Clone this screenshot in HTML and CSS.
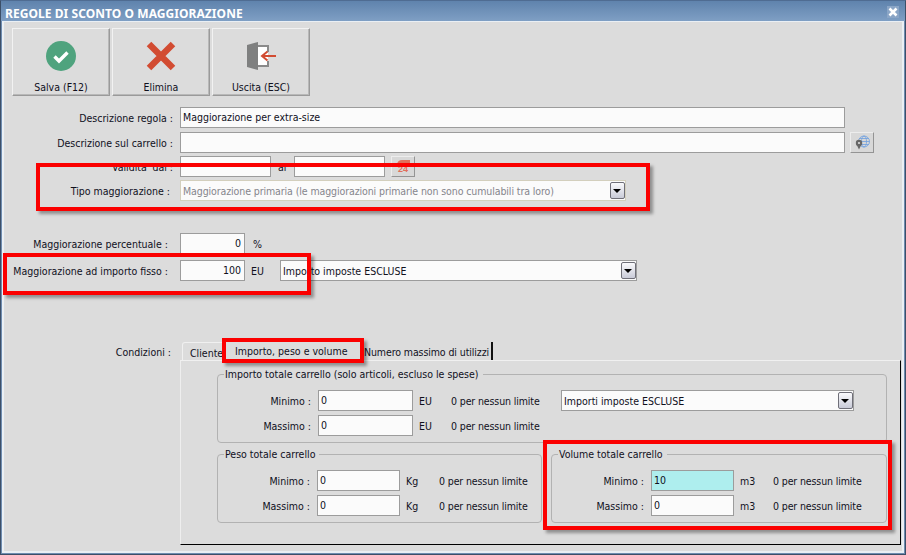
FILE: index.html
```html
<!DOCTYPE html>
<html lang="it">
<head>
<meta charset="utf-8">
<title>Regole di sconto o maggiorazione</title>
<link rel="stylesheet" href="styles.css">
</head>
<body>
<div class="window">
  <header class="titlebar">
    <span class="title">REGOLE DI SCONTO O MAGGIORAZIONE</span>
    <span class="close"><svg width="10" height="10" viewBox="0 0 10 10"><path d="M1.500 1.500l7 7M8.500 1.500l-7 7" stroke="#fff" stroke-width="2.600" fill="none"/></svg></span>
  </header>
  <div class="body">
    <nav class="toolbar">
      <button class="tool">
        <svg width="30" height="30" viewBox="0 0 30 30"><circle cx="15" cy="15" r="15" fill="#4fa37e"/><path d="M8.500 15.500l4.500 4.500 8.500-8.500" stroke="#fff" stroke-width="3.400" fill="none"/></svg>
        <span>Salva (F12)</span>
      </button>
      <button class="tool">
        <svg width="30" height="30" viewBox="0 0 30 30"><path d="M3 3l24 24M27 3L3 27" stroke="#d24c32" stroke-width="6.400" fill="none"/></svg>
        <span>Elimina</span>
      </button>
      <button class="tool">
        <svg width="30" height="30" viewBox="0 0 30 30"><path d="M1 4l11-3v28L1 26z" fill="#7f8080"/><path d="M12 4h10v22H12z" fill="#fff"/><path d="M12 4h11v7h-2V6h-9zM12 26h11v-6h-2v4h-9z" fill="#8a8a8a"/><path d="M30 15H17" stroke="#d24c32" stroke-width="2"/><path d="M21.500 10.500L16 15l5.500 4.500" stroke="#d24c32" stroke-width="2" fill="none"/></svg>
        <span>Uscita (ESC)</span>
      </button>
    </nav>

    <section class="form">
      <div class="row row-first">
        <label class="label">Descrizione regola :</label>
        <input class="input wide" value="Maggiorazione per extra-size">
      </div>
      <div class="row row-second">
        <label class="label">Descrizione sul carrello :</label>
        <input class="input wide">
        <button class="mini globe">
          <svg width="15" height="15" viewBox="0 0 15 15"><g fill="none" stroke="#6f9fe0" stroke-width=".8"><circle cx="9" cy="6.500" r="5.500"/><ellipse cx="9" cy="6.500" rx="2.500" ry="5.500"/><path d="M3.500 6.500h11M4.500 3.500h9M4.500 9.500h9"/></g><circle cx="4" cy="8" r="3.200" fill="#666"/><circle cx="4" cy="8" r="1.100" fill="#ddd"/><path d="M1.800 10L4 14.500 6.200 10z" fill="#666"/></svg>
        </button>
      </div>
      <div class="row">
        <label class="label">Validita' dal :</label>
        <input class="input date">
        <span class="between">al</span>
        <input class="input date">
        <button class="mini cal">
          <svg width="16" height="15" viewBox="0 0 16 15"><path d="M2 5Q3 1 7 1h8v3H7Q5 4 4 6z" fill="#e0705c"/><text x="3" y="13" class="cal-num">24</text></svg>
        </button>
      </div>
      <div class="row">
        <label class="label tight-sm">Tipo maggiorazione :</label>
        <div class="select type-select disabled">
          <span>Maggiorazione primaria (le maggiorazioni primarie non sono cumulabili tra loro)</span>
          <i class="arrow"></i>
        </div>
      </div>
      <div class="row amount-first">
        <label class="label tight">Maggiorazione percentuale :</label>
        <input class="input num" value="0">
        <span class="unit unit-pct">%</span>
      </div>
      <div class="row amount-next">
        <label class="label tight">Maggiorazione ad importo fisso :</label>
        <input class="input num" value="100">
        <span class="unit">EU</span>
        <div class="select tax-select">
          <span>Importo imposte ESCLUSE</span>
          <i class="arrow"></i>
        </div>
      </div>
    </section>

    <section class="conditions">
      <div class="tabs-row">
        <span class="label cond-label">Condizioni :</span>
        <div class="tabs">
          <span class="tab tab-client">Cliente</span>
          <span class="tab tab-active">Importo, peso e volume</span>
          <span class="tab tab-last">Numero massimo di utilizzi</span>
        </div>
      </div>
      <div class="panel">
        <fieldset class="group group-total">
          <legend>Importo totale carrello (solo articoli, escluso le spese)</legend>
          <div class="grow">
            <span class="glabel">Minimo :</span>
            <input class="input gi-wide" value="0">
            <span class="gunit">EU</span>
            <span class="hint">0 per nessun limite</span>
            <div class="select group-select">
              <span>Importi imposte ESCLUSE</span>
              <i class="arrow"></i>
            </div>
          </div>
          <div class="grow">
            <span class="glabel">Massimo :</span>
            <input class="input gi-wide" value="0">
            <span class="gunit">EU</span>
            <span class="hint">0 per nessun limite</span>
          </div>
        </fieldset>
        <div class="group-pair">
          <fieldset class="group group-weight">
            <legend>Peso totale carrello</legend>
            <div class="grow">
              <span class="glabel">Minimo :</span>
              <input class="input gi" value="0">
              <span class="gunit">Kg</span>
              <span class="hint">0 per nessun limite</span>
            </div>
            <div class="grow">
              <span class="glabel">Massimo :</span>
              <input class="input gi" value="0">
              <span class="gunit">Kg</span>
              <span class="hint">0 per nessun limite</span>
            </div>
          </fieldset>
          <fieldset class="group group-volume">
            <legend>Volume totale carrello</legend>
            <div class="grow">
              <span class="glabel">Minimo :</span>
              <input class="input gi focus" value="10">
              <span class="gunit">m3</span>
              <span class="hint">0 per nessun limite</span>
            </div>
            <div class="grow">
              <span class="glabel">Massimo :</span>
              <input class="input gi" value="0">
              <span class="gunit">m3</span>
              <span class="hint">0 per nessun limite</span>
            </div>
          </fieldset>
        </div>
      </div>
    </section>
  </div>

  <div class="mark mark-type"></div>
  <div class="mark mark-fixed"></div>
  <div class="mark mark-tab"></div>
  <div class="mark mark-volume"></div>
</div>
</body>
</html>
```

FILE: styles.css
```css
* { box-sizing: border-box; }
html, body { margin: 0; padding: 0; }
body {
  width: 906px;
  height: 555px;
  overflow: hidden;
  font-family: "DejaVu Sans Condensed", "DejaVu Sans", sans-serif;
  font-stretch: condensed;
  font-size: 10.5px;
  color: #10101c;
}
.window {
  position: relative;
  width: 906px;
  height: 555px;
  display: flex;
  flex-direction: column;
  background: #6e8cb0;
  border: 1px solid #3c4f68;
  border-top-color: #4f6c92;
}
.titlebar {
  flex: none;
  height: 20px;
  display: flex;
  align-items: center;
  justify-content: space-between;
  padding: 0 6px 0 4px;
  background: linear-gradient(#5f83ad, #7f9fc4);
}
.title {
  padding-top: 4px;
  color: #fff;
  font-family: "Noto Sans", sans-serif;
  font-stretch: normal;
  font-size: 12px;
  font-weight: 700;
  letter-spacing: .06px;
}
.close {
  width: 12px;
  height: 12px;
  margin-top: 2px;
  display: flex;
  align-items: center;
  justify-content: center;
  background: #8aa5c6;
}
.body {
  flex: 1;
  margin: 0 1px 1px;
  padding: 6px 0 0 8px;
  background: #dcdcdc;
  border: 2px solid #eaeff4;
  border-top-width: 1px;
  display: flex;
  flex-direction: column;
}

.toolbar { display: flex; gap: 2px; }
.tool {
  width: 98px;
  height: 68px;
  padding: 12px 0 0;
  display: flex;
  flex-direction: column;
  align-items: center;
  gap: 10px;
  font: inherit;
  color: inherit;
  background: #dcdcdc;
  border: 1px solid;
  border-color: #f2f2f2 #9a9a9a #9a9a9a #f2f2f2;
  box-shadow: inset -1px -1px 0 #b8b8b8;
}

.form { margin-top: 11px; }
.row {
  display: flex;
  align-items: center;
  height: 21px;
  margin-bottom: 3px;
}
.row-first { margin-bottom: 4px; }
.label {
  width: 161px;
  margin-right: 7px;
  text-align: right;
  white-space: nowrap;
}
.label.tight-sm { width: 158px; margin-right: 10px; }
.label.tight { width: 156px; margin-right: 12px; }
.input {
  height: 21px;
  padding: 0 2px 2px;
  font: inherit;
  color: inherit;
  background: #fbfbfb;
  border: 1px solid #9c9c9c;
  border-radius: 0;
  outline: none;
}
.wide { width: 665px; }
.date { width: 91px; }
.between { width: 23px; padding-left: 7px; }
.mini {
  width: 24px;
  height: 21px;
  padding: 0;
  display: flex;
  align-items: center;
  justify-content: center;
  background: #d8d8d8;
  border: 1px solid;
  border-color: #ededed #949494 #949494 #ededed;
}
.globe { margin-left: 5px; }
.cal { margin-left: 6px; }
.cal-num { font-size: 9px; font-weight: 700; fill: #e0705c; font-family: "Liberation Sans", sans-serif; }

.select {
  height: 21px;
  padding: 0 0 0 2px;
  display: flex;
  align-items: center;
  justify-content: space-between;
  background: #fbfbfb;
  border: 1px solid #9c9c9c;
  white-space: nowrap;
}
.select.disabled { color: #85858c; border-color: #d3cfbd; letter-spacing: -.1px; }
.type-select { width: 446px; }
.tax-select { width: 357px; }
.group-select { width: 293px; margin-left: 20px; }
.arrow {
  position: relative;
  flex: none;
  width: 15px;
  height: 17px;
  background: linear-gradient(#fafafc, #c9cbd8);
  border: 1px solid #6f6f78;
  border-radius: 2px;
}
.arrow::after {
  content: "";
  position: absolute;
  left: 2px;
  top: 6px;
  border: 4px solid transparent;
  border-top: 4px solid #000;
  border-bottom: 0;
}
.amount-first { margin-top: 32px; margin-bottom: 6px; }
.num { width: 65px; text-align: right; padding-right: 3px; }
.unit { width: 35px; padding-left: 6px; }
.unit-pct { padding-left: 8px; }

.conditions { margin-top: 58px; flex: 1; display: flex; flex-direction: column; }
.tabs-row { display: flex; height: 18px; }
.label.cond-label { width: 159px; margin-right: 9px; padding-top: 4px; }
.tabs { display: flex; margin-left: 2px; align-items: stretch; }
.tab { padding-top: 4px; white-space: nowrap; }
.tab-client {
  width: 43px;
  padding-left: 7px;
  border: 1px solid #f0f0f0;
  border-bottom: 0;
  border-radius: 3px 0 0 0;
}
.tab-active {
  width: 138px;
  padding-left: 10px;
  padding-top: 3px;
}
.tab-last {
  width: 130px;
  padding-left: 1px;
  letter-spacing: -.1px;
  border-right: 2px solid #111;
}
.panel {
  flex: 1;
  margin: 0 1px 6px 168px;
  padding: 6px 0 0 36px;
  border-top: 1px solid #f0f0f0;
  border-left: 1px solid #eeeeee;
  border-right: 1px solid #000;
  border-bottom: 1px solid #000;
}
.group {
  margin: 0;
  padding: 0;
  border: 1px solid #b2b2b2;
  border-radius: 4px;
}
.group legend {
  margin-left: 6px;
  padding: 0 4px 0 1px;
  line-height: 14px;
}
.group-total { width: 670px; height: 76px; padding-top: 9px; }
.group-pair { display: flex; gap: 9px; margin-top: 4px; }
.group-weight, .group-volume { height: 76px; padding-top: 9px; }
.group-weight { width: 325px; }
.group-volume { width: 336px; }
.grow {
  display: flex;
  align-items: center;
  height: 21px;
  margin-bottom: 4px;
}
.glabel { width: 92px; text-align: right; margin-right: 7px; }
.group-total .glabel { width: 93px; }
.gi-wide { width: 95px; }
.gi { width: 83px; }
.gi.focus { background: #aeeeee; }
.gunit { width: 39px; padding-left: 6px; }
.group-total .gunit { width: 38px; padding-left: 6px; }
.hint { width: 90px; white-space: nowrap; letter-spacing: -.12px; }

.mark {
  position: absolute;
  border: 4px solid #fb0000;
  box-shadow: 3px 3px 3px rgba(0, 0, 0, .35);
  pointer-events: none;
}
.mark-type { left: 35px; top: 162px; width: 614px; height: 48px; }
.mark-fixed { left: 2px; top: 252px; width: 308px; height: 42px; }
.mark-tab { left: 221px; top: 337px; width: 142px; height: 25px; }
.mark-volume { left: 542px; top: 439px; width: 349px; height: 90px; }
```
